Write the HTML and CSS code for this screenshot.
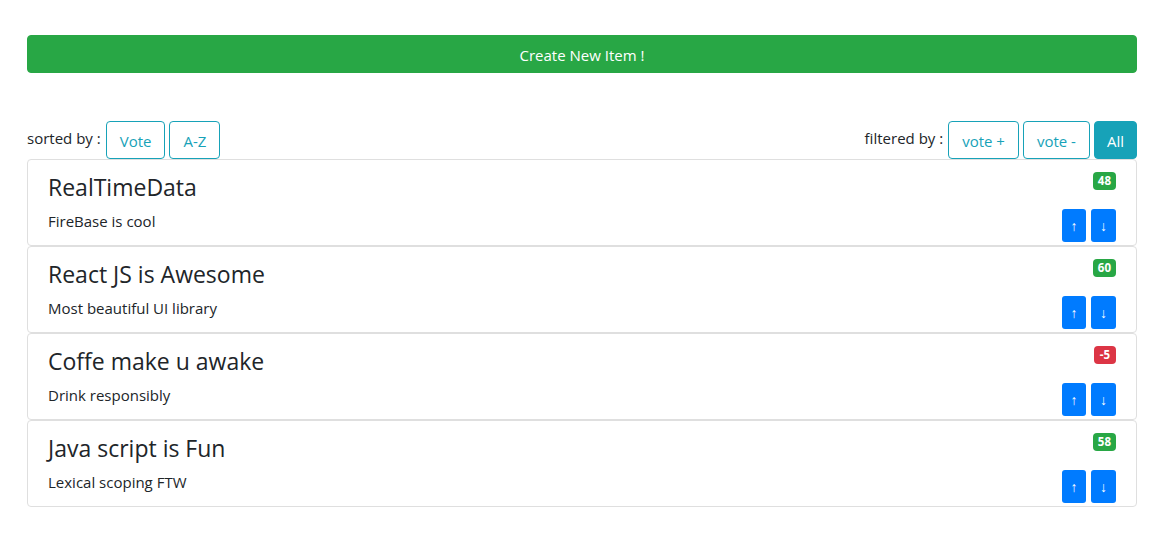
FILE: index.html
```html
<!DOCTYPE html>
<html>
<head>
<meta charset="utf-8">
<link rel="stylesheet" href="styles.css">
</head>
<body>
<div class="container">
  <button class="btn-create">Create New Item !</button>
  <div class="toolbar">
    <div class="group">
      <span class="label">sorted by :</span>
      <button class="btn-outline">Vote</button>
      <button class="btn-outline">A-Z</button>
    </div>
    <div class="group">
      <span class="label">filtered by :</span>
      <button class="btn-outline">vote +</button>
      <button class="btn-outline">vote -</button>
      <button class="btn-fill">All</button>
    </div>
  </div>
  <div class="list">
    <div class="card">
      <div class="main">
        <h4 class="title">RealTimeData</h4>
        <p class="desc">FireBase is cool</p>
      </div>
      <div class="side">
        <span class="badge green">48</span>
        <div class="votes"><button class="vbtn">↑</button><button class="vbtn">↓</button></div>
      </div>
    </div>
    <div class="card">
      <div class="main">
        <h4 class="title">React JS is Awesome</h4>
        <p class="desc">Most beautiful UI library</p>
      </div>
      <div class="side">
        <span class="badge green">60</span>
        <div class="votes"><button class="vbtn">↑</button><button class="vbtn">↓</button></div>
      </div>
    </div>
    <div class="card">
      <div class="main">
        <h4 class="title">Coffe make u awake</h4>
        <p class="desc">Drink responsibly</p>
      </div>
      <div class="side">
        <span class="badge red">-5</span>
        <div class="votes"><button class="vbtn">↑</button><button class="vbtn">↓</button></div>
      </div>
    </div>
    <div class="card">
      <div class="main">
        <h4 class="title">Java script is Fun</h4>
        <p class="desc">Lexical scoping FTW</p>
      </div>
      <div class="side">
        <span class="badge green">58</span>
        <div class="votes"><button class="vbtn">↑</button><button class="vbtn">↓</button></div>
      </div>
    </div>
  </div>
</div>
</body>
</html>
```
FILE: styles.css
```css
* { box-sizing: border-box; }
body {
  margin: 0;
  font-family: "Open Sans", "Noto Sans", sans-serif;
  font-size: 16px;
  color: #212529;
  background: #fff;
}
.container {
  margin: 0 28px 0 27px;
  padding-top: 35px;
}
button { font-family: inherit; cursor: pointer; }
.btn-create {
  display: block;
  width: 100%;
  height: 38px;
  background: #28a745;
  border: 1px solid #28a745;
  color: #fff;
  font-size: 15px;
  border-radius: 4px;
  padding-top: 2px;
}
.toolbar {
  margin-top: 48px;
  display: flex;
  justify-content: space-between;
  align-items: flex-end;
}
.group {
  display: flex;
  align-items: center;
  gap: 4px;
}
.label {
  font-size: 15px;
  margin-right: 1px;
  position: relative;
  top: -2px;
}
.btn-outline, .btn-fill {
  height: 38px;
  padding: 2px 13px 0;
  font-size: 15px;
  border-radius: 4px;
  border: 1px solid #17a2b8;
  color: #17a2b8;
  background: #fff;
}
.btn-fill {
  background: #17a2b8;
  color: #fff;
  padding: 2px 12px 0;
}
.list {
  display: flex;
  flex-direction: column;
}
.card {
  border: 1px solid #dfdfdf;
  border-radius: 4px;
  padding: 12px 20px 3px 20px;
  display: flex;
  justify-content: space-between;
}
.title {
  margin: 1px 0 7px;
  font-size: 23px;
  font-weight: 400;
  line-height: 29px;
}
.desc {
  margin: 0;
  font-size: 15px;
  line-height: 24px;
}
.side {
  display: flex;
  flex-direction: column;
  align-items: flex-end;
}
.badge {
  height: 18px;
  margin-bottom: 19px;
  padding: 0 5px;
  min-width: 22px;
  border-radius: 4px;
  color: #fff;
  font-size: 11.5px;
  font-weight: 700;
  line-height: 18px;
  text-align: center;
}
.green { background: #28a745; }
.red { background: #dc3545; }
.votes { display: flex; gap: 5px; }
.vbtn {
  width: 25px;
  height: 33px;
  padding: 0;
  border: none;
  border-radius: 3px;
  background: #007bff;
  color: #fff;
  font-size: 14px;
}
.vbtn:first-child { width: 24px; }
```
